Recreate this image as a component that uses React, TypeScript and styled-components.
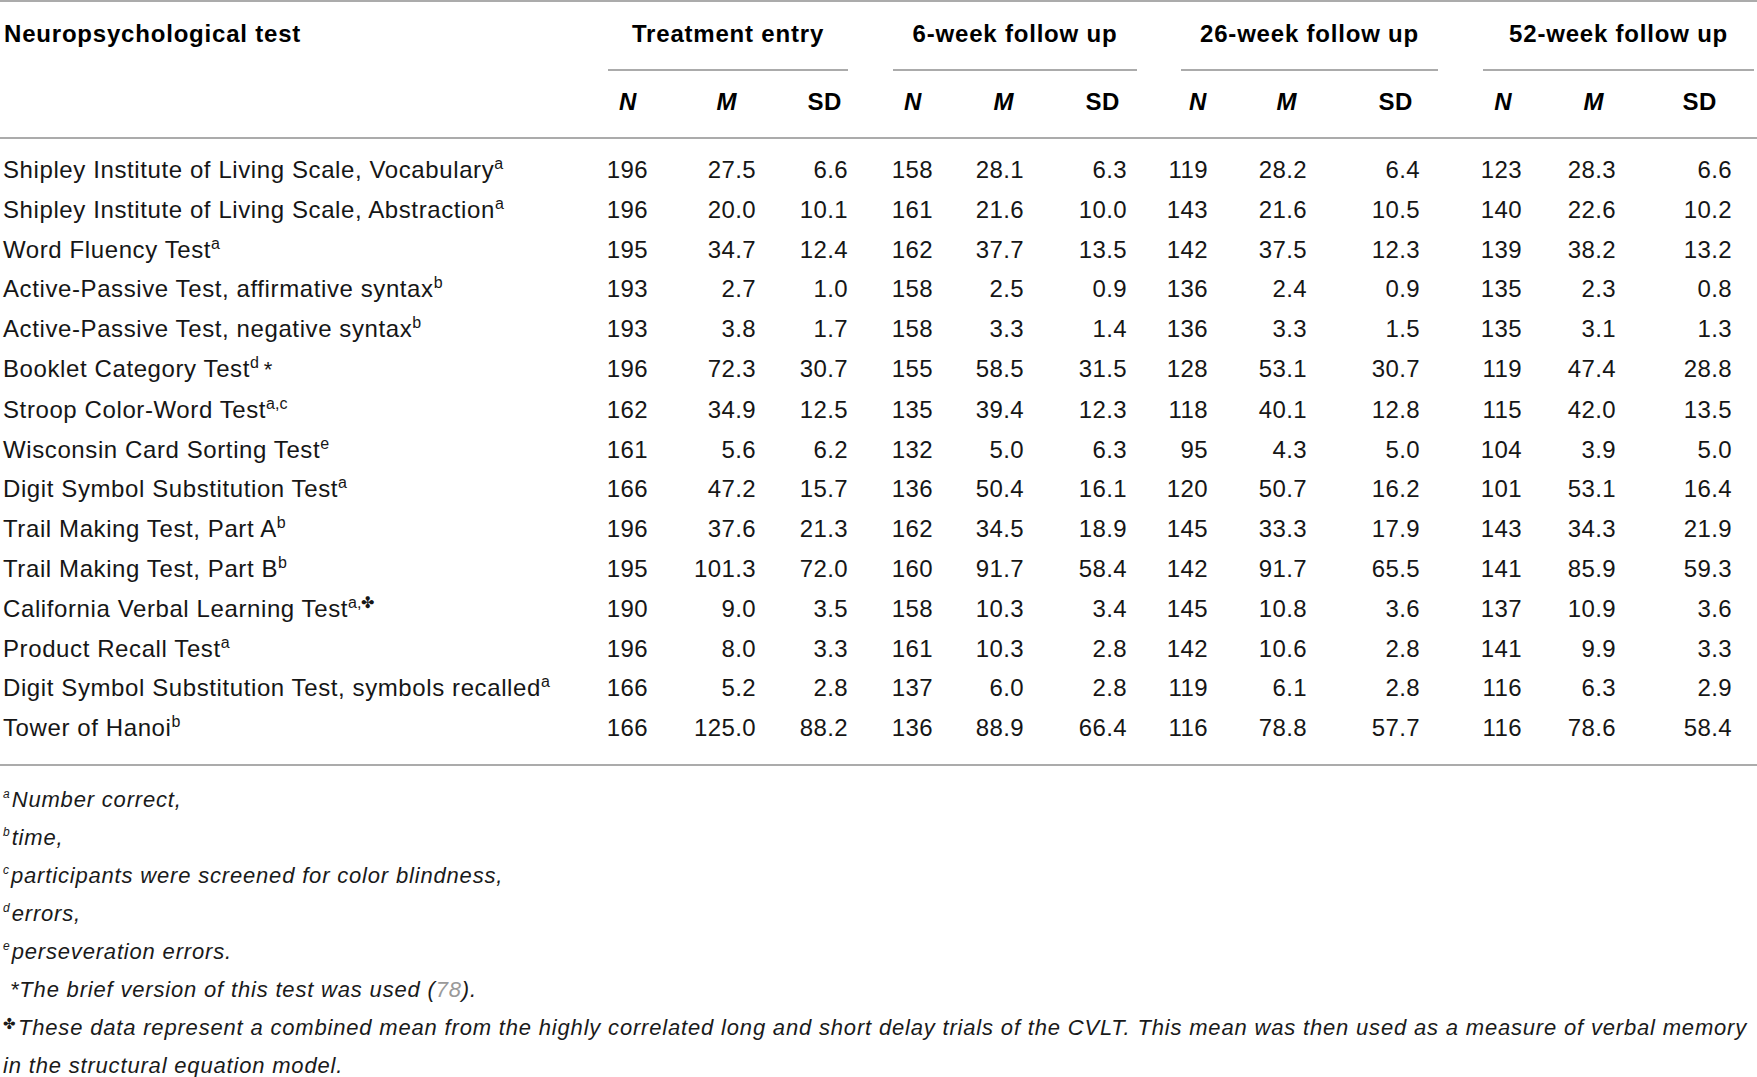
import React from 'react';
import styled, { createGlobalStyle } from 'styled-components';

const GlobalStyle = createGlobalStyle`
  html, body {
    margin: 0;
    padding: 0;
    background: #ffffff;
  }
  body {
    font-family: "Liberation Sans", Arial, sans-serif;
    color: #161616;
  }
`;

const LINE = '#ababab';

// column right edges come from the cell widths; the last one is an empty gutter
const colWidths = [590, 58, 108, 92, 85, 91, 103, 81, 99, 113, 102, 94, 116, 25];

interface Group {
  title: string;
  span: number;
  lineLeft: number;
  lineRight: number;
  headPad: [number, number, number];
}

const groups: Group[] = [
  { title: 'Treatment entry', span: 3, lineLeft: 18, lineRight: 0, headPad: [11, 19, 6] },
  { title: '6-week follow up', span: 3, lineLeft: 45, lineRight: -10, headPad: [11, 10, 7] },
  { title: '26-week follow up', span: 3, lineLeft: 54, lineRight: -18, headPad: [1, 10, 7] },
  { title: '52-week follow up', span: 4, lineLeft: 63, lineRight: 3, headPad: [10, 12, 15] },
];

type Triple = [string, string, string];

interface Row {
  name: string;
  note: string;
  star?: boolean;
  values: [Triple, Triple, Triple, Triple];
}

const rows: Row[] = [
  { name: 'Shipley Institute of Living Scale, Vocabulary', note: 'a', values: [['196', '27.5', '6.6'], ['158', '28.1', '6.3'], ['119', '28.2', '6.4'], ['123', '28.3', '6.6']] },
  { name: 'Shipley Institute of Living Scale, Abstraction', note: 'a', values: [['196', '20.0', '10.1'], ['161', '21.6', '10.0'], ['143', '21.6', '10.5'], ['140', '22.6', '10.2']] },
  { name: 'Word Fluency Test', note: 'a', values: [['195', '34.7', '12.4'], ['162', '37.7', '13.5'], ['142', '37.5', '12.3'], ['139', '38.2', '13.2']] },
  { name: 'Active-Passive Test, affirmative syntax', note: 'b', values: [['193', '2.7', '1.0'], ['158', '2.5', '0.9'], ['136', '2.4', '0.9'], ['135', '2.3', '0.8']] },
  { name: 'Active-Passive Test, negative syntax', note: 'b', values: [['193', '3.8', '1.7'], ['158', '3.3', '1.4'], ['136', '3.3', '1.5'], ['135', '3.1', '1.3']] },
  { name: 'Booklet Category Test', note: 'd', star: true, values: [['196', '72.3', '30.7'], ['155', '58.5', '31.5'], ['128', '53.1', '30.7'], ['119', '47.4', '28.8']] },
  { name: 'Stroop Color-Word Test', note: 'a,c', values: [['162', '34.9', '12.5'], ['135', '39.4', '12.3'], ['118', '40.1', '12.8'], ['115', '42.0', '13.5']] },
  { name: 'Wisconsin Card Sorting Test', note: 'e', values: [['161', '5.6', '6.2'], ['132', '5.0', '6.3'], ['95', '4.3', '5.0'], ['104', '3.9', '5.0']] },
  { name: 'Digit Symbol Substitution Test', note: 'a', values: [['166', '47.2', '15.7'], ['136', '50.4', '16.1'], ['120', '50.7', '16.2'], ['101', '53.1', '16.4']] },
  { name: 'Trail Making Test, Part A', note: 'b', values: [['196', '37.6', '21.3'], ['162', '34.5', '18.9'], ['145', '33.3', '17.9'], ['143', '34.3', '21.9']] },
  { name: 'Trail Making Test, Part B', note: 'b', values: [['195', '101.3', '72.0'], ['160', '91.7', '58.4'], ['142', '91.7', '65.5'], ['141', '85.9', '59.3']] },
  { name: 'California Verbal Learning Test', note: 'a,\u2724', values: [['190', '9.0', '3.5'], ['158', '10.3', '3.4'], ['145', '10.8', '3.6'], ['137', '10.9', '3.6']] },
  { name: 'Product Recall Test', note: 'a', values: [['196', '8.0', '3.3'], ['161', '10.3', '2.8'], ['142', '10.6', '2.8'], ['141', '9.9', '3.3']] },
  { name: 'Digit Symbol Substitution Test, symbols recalled', note: 'a', values: [['166', '5.2', '2.8'], ['137', '6.0', '2.8'], ['119', '6.1', '2.8'], ['116', '6.3', '2.9']] },
  { name: 'Tower of Hanoi', note: 'b', values: [['166', '125.0', '88.2'], ['136', '88.9', '66.4'], ['116', '78.8', '57.7'], ['116', '78.6', '58.4']] },
];

const notes = [
  { mark: 'a', text: 'Number correct,' },
  { mark: 'b', text: 'time,' },
  { mark: 'c', text: 'participants were screened for color blindness,' },
  { mark: 'd', text: 'errors,' },
  { mark: 'e', text: 'perseveration errors.' },
];

const Page = styled.div`
  width: 1757px;
`;

const Table = styled.table`
  width: 1757px;
  table-layout: fixed;
  border-collapse: separate;
  border-spacing: 0;
  border-top: 2px solid ${LINE};
  font-size: 24px;
  letter-spacing: 0.6px;
`;

const NameHead = styled.th`
  text-align: left;
  vertical-align: top;
  padding: 17px 0 0 4px;
  font-weight: 700;
  line-height: 30px;
  letter-spacing: 0.8px;
  color: #000;
  border-bottom: 2px solid ${LINE};
  white-space: nowrap;
`;

const GroupHead = styled.th`
  padding: 17px 0 0 0;
  font-weight: 700;
  line-height: 30px;
  letter-spacing: 0.8px;
  color: #000;
`;

const GroupTitle = styled.div<{ $left: number; $right: number }>`
  margin-left: ${(p) => p.$left}px;
  margin-right: ${(p) => p.$right}px;
  padding-bottom: 20px;
  border-bottom: 2px solid ${LINE};
  text-align: center;
  white-space: nowrap;
`;

const SubHead = styled.th<{ $pad: number; $italic?: boolean }>`
  padding: 16px ${(p) => p.$pad}px 20px 0;
  text-align: right;
  font-weight: 700;
  font-style: ${(p) => (p.$italic ? 'italic' : 'normal')};
  line-height: 30px;
  color: #000;
  border-bottom: 2px solid ${LINE};
`;

const Body = styled.tbody`
  tr:first-child td {
    padding-top: 11px;
  }
  tr:last-child td {
    padding-bottom: 16px;
    border-bottom: 2px solid ${LINE};
  }
`;

const NameCell = styled.td`
  padding: 0 0 0 3px;
  line-height: 39.8px;
  white-space: nowrap;
`;

const NumCell = styled.td`
  padding: 0;
  text-align: right;
  line-height: 39.8px;
  letter-spacing: 0.4px;
  white-space: nowrap;
`;

const Sup = styled.sup`
  font-size: 16px;
  line-height: 0;
  vertical-align: 9px;
  letter-spacing: 0;
`;

const Star = styled.span`
  margin-left: 5px;
  font-size: 22px;
  letter-spacing: 0;
`;

const Notes = styled.div`
  padding: 15px 0 0 3px;
  font-style: italic;
  font-size: 22px;
  line-height: 38px;
  letter-spacing: 0.82px;
  color: #1a1a1a;
`;

const Note = styled.div`
  white-space: nowrap;
`;

const Mark = styled.sup`
  font-size: 12px;
  line-height: 0;
  vertical-align: 9px;
  margin-right: 2px;
  letter-spacing: 0;
`;

const Cross = styled.span`
  font-style: normal;
  font-size: 15px;
  vertical-align: 6px;
  line-height: 0;
  margin-right: 2px;
  letter-spacing: 0;
`;

const Ref = styled.span`
  color: #9a9a9a;
`;

export default function App() {
  return (
    <Page>
      <GlobalStyle />
      <Table>
        <colgroup>
          {colWidths.map((w, i) => (
            <col key={i} style={{ width: w }} />
          ))}
        </colgroup>
        <thead>
          <tr>
            <NameHead rowSpan={2}>Neuropsychological test</NameHead>
            {groups.map((g) => (
              <GroupHead key={g.title} colSpan={g.span}>
                <GroupTitle $left={g.lineLeft} $right={g.lineRight}>
                  {g.title}
                </GroupTitle>
              </GroupHead>
            ))}
          </tr>
          <tr>
            {groups.map((g) => (
              <React.Fragment key={g.title}>
                <SubHead $pad={g.headPad[0]} $italic>N</SubHead>
                <SubHead $pad={g.headPad[1]} $italic>M</SubHead>
                <SubHead $pad={g.headPad[2]}>SD</SubHead>
              </React.Fragment>
            ))}
            <SubHead $pad={0} />
          </tr>
        </thead>
        <Body>
          {rows.map((r) => (
            <tr key={r.name}>
              <NameCell>
                {r.name}
                <Sup>{r.note}</Sup>
                {r.star && <Star>*</Star>}
              </NameCell>
              {r.values.map((v, gi) =>
                v.map((x, ci) => <NumCell key={`${gi}-${ci}`}>{x}</NumCell>)
              )}
              <NumCell />
            </tr>
          ))}
        </Body>
      </Table>
      <Notes>
        {notes.map((n) => (
          <Note key={n.mark}>
            <Mark>{n.mark}</Mark>
            {n.text}
          </Note>
        ))}
        <Note>
          &nbsp;*The brief version of this test was used (<Ref>78</Ref>).
        </Note>
        <Note>
          <Cross>{'\u2724'}</Cross>
          These data represent a combined mean from the highly correlated long and short delay trials of the CVLT. This mean was then used as a measure of verbal memory
        </Note>
        <Note>in the structural equation model.</Note>
      </Notes>
    </Page>
  );
}
